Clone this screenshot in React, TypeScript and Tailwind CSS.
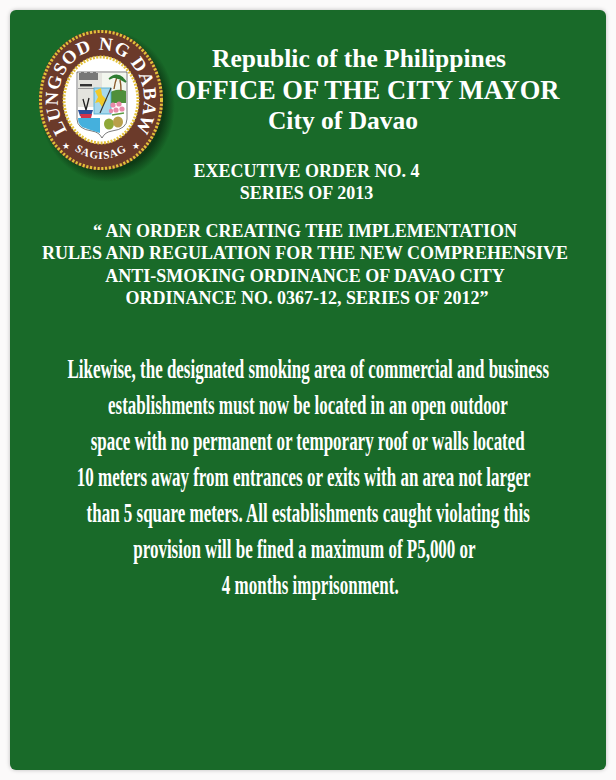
const Seal = () => (
  <svg width="136" height="152" viewBox="0 0 136 152" className="shrink-0 block">
    <defs>
      <radialGradient id="sh" cx="50%" cy="50%" r="50%">
        <stop offset="84%" stopColor="#0a2f10" stopOpacity="0.8" />
        <stop offset="100%" stopColor="#0a2f10" stopOpacity="0" />
      </radialGradient>
      <path id="top" d="M 28 100.6 A 43 50 0 1 1 96 100.6" fill="none" />
      <path id="bot" d="M 17 95.7 A 50 59 0 0 0 107 95.7" fill="none" />
    </defs>
    <ellipse cx="68" cy="76" rx="68" ry="76" fill="url(#sh)" />
    <ellipse cx="62" cy="70" rx="62" ry="70" fill="#6b3a2a" />
    <ellipse cx="62" cy="70" rx="60.5" ry="68.5" fill="none" stroke="#e3c13a" strokeWidth="3" strokeDasharray="2.2 1.6" />
    <ellipse cx="62" cy="70" rx="38" ry="44" fill="#ffffff" />
    <ellipse cx="62" cy="70" rx="37" ry="43" fill="none" stroke="#e3c13a" strokeWidth="3" strokeDasharray="2 1.4" />
    <text fontFamily="'Liberation Serif', serif" fontWeight="700" fontSize="18.5" fill="#ffffff" letterSpacing="0.9" textAnchor="middle">
      <textPath href="#top" startOffset="50%">LUNGSOD NG DABAW</textPath>
    </text>
    <text fontFamily="'Liberation Serif', serif" fontWeight="700" fontSize="11" fill="#ffffff" letterSpacing="1" textAnchor="middle">
      <textPath href="#bot" startOffset="50%">SAGISAG</textPath>
    </text>
    <text x="27" y="119" fontSize="9" fill="#fff" textAnchor="middle" fontFamily="'DejaVu Sans', sans-serif">★</text>
    <text x="97" y="119" fontSize="9" fill="#fff" textAnchor="middle" fontFamily="'DejaVu Sans', sans-serif">★</text>
    <g transform="translate(1 7)">
      <path d="M37 35 H87 V82 Q87 92 72 94 Q65 95 62 101 Q59 95 52 94 Q37 92 37 82 Z" fill="#fff" stroke="#444" strokeWidth="0.7" />
      <rect x="38" y="36" width="24" height="34" fill="#e4e4de" />
      <path d="M39 36 h2 v-1 h3 v1 h3 v-1 h3 v1 h3 v-1 h3 v1 h2 v7 h-19 z" fill="#777" />
      <rect x="40" y="47" width="12" height="2.4" fill="#333" />
      <rect x="38" y="51" width="16" height="1" fill="#999" />
      <path d="M62 36 H86 V62 H62 Z" fill="#f2f6ee" />
      <path d="M66 58 Q76 50 86 54 V66 H66 Z" fill="#4f8f3a" />
      <path d="M74 52 Q75 45 77 40 M81 54 Q81 47 80 43" stroke="#8a5a2a" strokeWidth="1.4" fill="none" />
      <path d="M69 42 Q76 35 83 41 Q76 38 69 42 M74 40 Q80 37 86 45 Q80 41 74 40" fill="#2e7d32" stroke="#2e7d32" strokeWidth="1.6" />
      <rect x="54" y="51" width="17" height="26" fill="#a6d8ec" stroke="#45a8d0" strokeWidth="0.8" />
      <path d="M55 54 L61 51 L62 58 L67 63 L62 70 L59 65 L55 66 L58 60 Z" fill="#f0c929" />
      <path d="M60 76 L71 51" stroke="#333" strokeWidth="1.1" />
      <path d="M38 73 H53 L51 79 H40 Z" fill="#2a4f9a" />
      <path d="M40 77 H52 L51 81 H41 Z" fill="#d2344a" />
      <path d="M43 62 L46 73 M49 61 L46 73" stroke="#222" strokeWidth="1.3" />
      <path d="M38 81 H60 V96 Q50 93 42 90 Q38 87 38 81Z" fill="#45b0dd" />
      <g fill="#e889a8">
        <circle cx="73" cy="68" r="2.6" /><circle cx="79" cy="67" r="2.6" /><circle cx="76" cy="73" r="2.6" /><circle cx="82" cy="72" r="2.6" /><circle cx="71" cy="74" r="2.2" />
      </g>
      <path d="M72 78 L84 76" stroke="#5d9c46" strokeWidth="1.5" />
      <ellipse cx="69" cy="87" rx="5" ry="5.5" fill="#8fa838" />
      <ellipse cx="78" cy="85" rx="5" ry="5.5" fill="#b9a04a" />
    </g>
  </svg>
);

const heading = "whitespace-nowrap text-white font-bold";
const body = "whitespace-nowrap text-center text-white font-bold text-[27.5px] leading-[36px] scale-x-[0.617]";

export default function App() {
  return (
    <div className="w-[616px] h-[780px] overflow-hidden bg-[#fbfafa] p-2.5 font-['Liberation_Serif',serif]">
      <div className="h-[760px] overflow-hidden rounded-md bg-[#196a29] shadow-[0_0_4px_rgba(0,0,0,0.25)] flex flex-col pt-5">
        <div className="flex pl-[29px]">
          <Seal />
          <div className="flex flex-col items-center w-[385px] shrink-0 pt-[12px] text-center">
            <div className={`${heading} text-[25.5px] leading-[33px] -ml-[17px]`}>Republic of the Philippines</div>
            <div className={`${heading} text-[26.5px] leading-[30px]`}>OFFICE OF THE CITY MAYOR</div>
            <div className={`${heading} text-[25.5px] leading-[31px] -ml-[49px]`}>City of Davao</div>
          </div>
        </div>
        <div className={`${heading} -mt-[22px] pr-[3px] text-center text-[18px] leading-[22px]`}>
          <div>EXECUTIVE ORDER NO. 4</div>
          <div>SERIES OF 2013</div>
        </div>
        <div className={`${heading} mt-[16px] pr-[6px] text-center text-[18px] leading-[22.4px]`}>
          <div>“ AN ORDER CREATING THE IMPLEMENTATION</div>
          <div>RULES AND REGULATION FOR THE NEW COMPREHENSIVE</div>
          <div>ANTI-SMOKING ORDINANCE OF DAVAO CITY</div>
          <div className="pl-[4px]">ORDINANCE NO. 0367-12, SERIES OF 2012”</div>
        </div>
        <div className="mt-[41px] flex flex-col items-center overflow-hidden">
          <div className={body}>Likewise, the designated smoking area of commercial and business</div>
          <div className={body}>establishments must now be located in an open outdoor</div>
          <div className={body}>space with no permanent or temporary roof or walls located</div>
          <div className={`${body} -ml-[8px]`}>10 meters away from entrances or exits with an area not larger</div>
          <div className={body}>than 5 square meters. All establishments caught violating this</div>
          <div className={`${body} -ml-[8px]`}>provision will be fined a maximum of P5,000 or</div>
          <div className={`${body} ml-[4px]`}>4 months imprisonment.</div>
        </div>
      </div>
    </div>
  );
}
